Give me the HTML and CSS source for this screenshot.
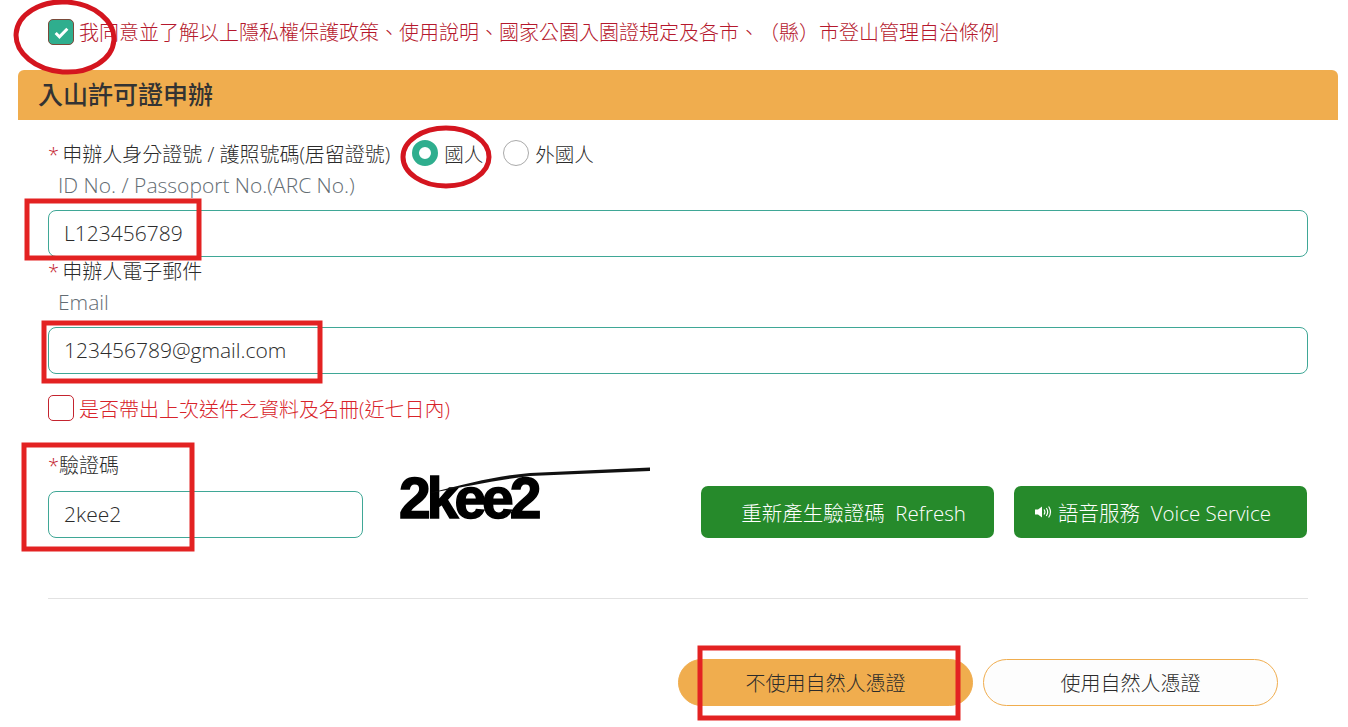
FILE: index.html
```html
<!DOCTYPE html>
<html lang="zh-Hant">
<head>
  <meta charset="UTF-8" />
  <meta name="viewport" content="width=device-width, initial-scale=1.0"/>
  <title>入山許可證申辦</title>
  <link rel="stylesheet" href="styles.css">
</head>
<body>
  <div class="page">
    <label class="agree">
      <span class="check check-on">
        <svg viewBox="0 0 16 16" width="17" height="17"><path d="M2.5 8.5l3.6 3.6 7.4-7.6" fill="none" stroke="#fff" stroke-width="2.8"/></svg>
      </span>
      <span class="agree-text">我同意並了解以上隱私權保護政策、使用說明、國家公園入園證規定及各市、（縣）市登山管理自治條例</span>
    </label>

    <h2 class="panel-title">入山許可證申辦</h2>

    <form class="form">
      <div class="label-row">
        <span class="label"><i class="req">*</i> 申辦人身分證號 / 護照號碼(居留證號)</span>
        <span class="radio radio-on"></span><span class="radio-text">國人</span>
        <span class="radio"></span><span class="radio-text">外國人</span>
      </div>
      <div class="label-en label-en-id">ID No. / Passoport No.(ARC No.)</div>
      <input class="input" type="text" value="L123456789">

      <div class="label label-mail"><i class="req">*</i> 申辦人電子郵件</div>
      <div class="label-en">Email</div>
      <input class="input" type="text" value="123456789@gmail.com">

      <label class="bring">
        <span class="check"></span>
        <span class="bring-text">是否帶出上次送件之資料及名冊(近七日內)</span>
      </label>

      <div class="captcha-row">
        <div class="captcha-field">
          <div class="label"><i class="req req-tight">*</i>驗證碼</div>
          <input class="input input-code" type="text" value="2kee2">
        </div>
        <div class="captcha-pic">
          <span class="captcha-text">2kee2</span>
          <svg class="captcha-line" width="262" height="40" viewBox="0 0 262 40"><path d="M40 27C80 17 105 10 140 7L260 1.500V5L140 10C105 14 80 20 40 27Z" fill="#111"/></svg>
        </div>
        <div class="captcha-btns">
          <button class="btn-green btn-refresh" type="button">重新產生驗證碼&nbsp; Refresh</button>
          <button class="btn-green btn-voice" type="button">
            <svg width="18" height="14" viewBox="0 0 18 14"><path d="M1 4.500h3L8 1.500v11L4 9.500H1z" fill="#fff"/><path d="M10 4.500q1.800 2.500 0 5M12.300 3q2.800 4 0 8M14.600 1.500q3.800 5.500 0 11" fill="none" stroke="#fff" stroke-width="1.200"/></svg>
            語音服務&nbsp; Voice Service
          </button>
        </div>
      </div>

      <hr class="line">

      <div class="submit-row">
        <button class="btn-pill btn-pill-on" type="button">不使用自然人憑證</button>
        <button class="btn-pill" type="button">使用自然人憑證</button>
      </div>
    </form>
  </div>

  <!-- red marks drawn over the page -->
  <svg class="marks" width="1348" height="727" viewBox="0 0 1348 727">
    <g fill="none" stroke="#d4151f" stroke-width="5">
      <ellipse cx="65" cy="37" rx="49" ry="35" transform="rotate(4 65 37)"/>
      <ellipse cx="446" cy="157" rx="43" ry="29"/>
    </g>
    <g fill="none" stroke="#e32222" stroke-width="5">
      <rect x="27" y="201" width="172" height="57"/>
      <rect x="44" y="323" width="276" height="58"/>
      <rect x="24" y="445" width="168" height="104"/>
      <rect x="700" y="648" width="258" height="70"/>
    </g>
  </svg>
</body>
</html>
```

FILE: styles.css
```css
* { box-sizing: border-box; }

body {
  margin: 0;
  background: #fff;
  color: #2b2b2b;
  font-family: "Open Sans", "Noto Sans CJK TC", sans-serif;
  font-size: 20px;
  font-weight: 300;
  text-spacing-trim: space-all;
}

.page {
  padding: 19px 10px 0 18px;
  height: 727px;
  overflow: hidden;
}

.agree {
  display: flex;
  align-items: center;
  gap: 5px;
  height: 26px;
  margin-left: 30px;
}

.agree-text {
  margin-top: -2px;
  color: #b5182d;
  font-size: 20px;
  white-space: nowrap;
}

.check {
  flex: none;
  display: flex;
  align-items: center;
  justify-content: center;
  width: 26px;
  height: 26px;
  border: 1px solid #c4242f;
  border-radius: 5px;
  background: #fff;
}

.check-on {
  background: #2fae8e;
  border-color: #7a4a3a;
}

.panel-title {
  margin: 25px 0 0;
  height: 50px;
  padding-left: 20px;
  background: #f0ad4e;
  border-radius: 6px 6px 0 0;
  color: #333;
  font-size: 25px;
  font-weight: 500;
  line-height: 48px;
}

.form {
  padding: 0 30px;
}

.label-row {
  display: flex;
  align-items: center;
  height: 38px;
  margin-top: 15px;
}

.label {
  font-size: 20px;
  line-height: 30px;
  white-space: nowrap;
}

.label-row .label {
  margin-top: 1px;
}

.req {
  margin-right: -2px;
  color: #c4242f;
  font-style: normal;
}

.req-tight {
  margin-right: 0;
}

.radio {
  flex: none;
  width: 26px;
  height: 26px;
  margin: -2px 0 0 20px;
  border: 1px solid #aaa;
  border-radius: 50%;
  background: #fff;
}

.radio-on {
  margin-left: 22px;
  border: 7px solid #2fae8e;
}

.radio-text {
  margin: -1px 0 0 6px;
  font-size: 19.5px;
}

.label-en {
  color: #636c73;
  font-size: 21px;
  line-height: 30px;
  padding-left: 10px;
}

.label-en-id {
  margin-top: -3px;
}

.input {
  display: block;
  width: 100%;
  height: 47px;
  margin-top: 10px;
  padding: 0 15px 2px;
  border: 1px solid #3fa796;
  border-radius: 8px;
  background: #fff;
  color: #2b2b2b;
  font-family: inherit;
  font-size: 21px;
  font-weight: 300;
}

.bring {
  display: flex;
  align-items: center;
  gap: 5px;
  margin-top: 21px;
  height: 26px;
}

.bring-text {
  color: #d8232a;
  font-size: 20px;
}

.captcha-row {
  display: flex;
  margin-top: 30px;
}

.captcha-field {
  width: 315px;
  flex: none;
}

.captcha-pic {
  position: relative;
  width: 262px;
  height: 70px;
  margin: 15px 0 0 27px;
  flex: none;
}

.captcha-text {
  position: absolute;
  left: 9px;
  top: 0;
  color: #000;
  font-family: "Liberation Sans", sans-serif;
  font-size: 57px;
  font-weight: 700;
  letter-spacing: -4px;
  line-height: 64px;
  -webkit-text-stroke: 1.500px #000;
}

.captcha-line {
  position: absolute;
  left: 0;
  top: 0;
}

.captcha-btns {
  display: flex;
  gap: 20px;
  margin: 35px 1px 0 auto;
}

.btn-green {
  display: flex;
  align-items: center;
  justify-content: center;
  gap: 6px;
  width: 293px;
  height: 52px;
  border: 0;
  border-radius: 7px;
  background: #268a2b;
  color: #fff;
  font-family: inherit;
  font-size: 20.5px;
  font-weight: 300;
}

.btn-refresh {
  padding-left: 18px;
}

.btn-voice {
  padding-right: 22px;
}

.line {
  margin: 60px 0 0;
  border: 0;
  border-top: 1px solid #e2e2e2;
}

.submit-row {
  display: flex;
  justify-content: flex-end;
  gap: 10px;
  margin-top: 60px;
  padding-right: 30px;
}

.btn-pill {
  width: 295px;
  height: 47px;
  border: 1px solid #f0ad4e;
  border-radius: 24px;
  background: #fdfdfd;
  color: #2b2b2b;
  font-family: inherit;
  font-size: 20px;
  font-weight: 300;
}

.btn-pill-on {
  background: #f0ad4e;
}

.marks {
  position: absolute;
  left: 0;
  top: 0;
  pointer-events: none;
}
```
